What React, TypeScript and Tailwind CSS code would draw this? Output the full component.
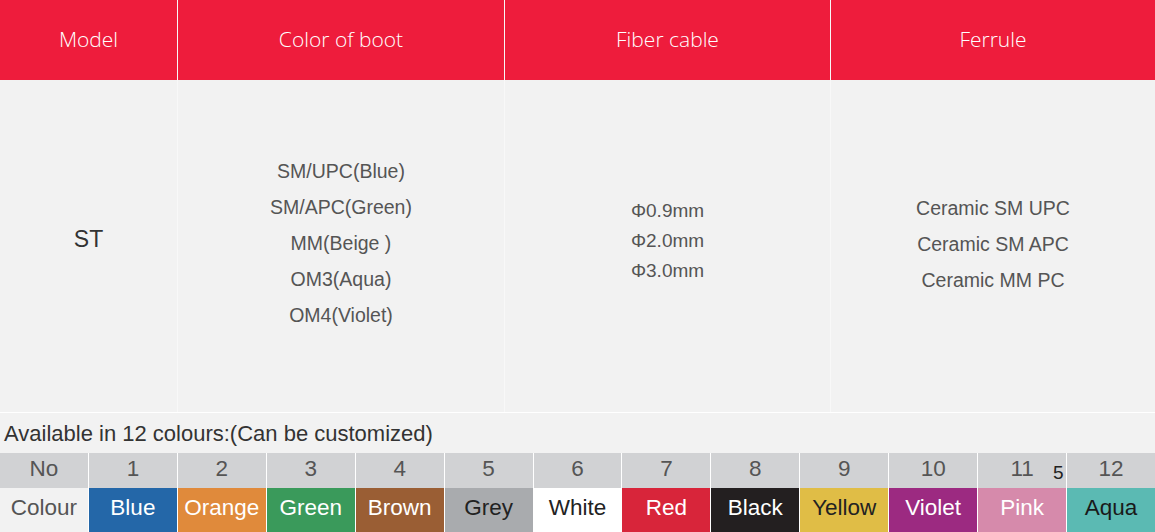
const swatches = [
  { no: 1, name: "Blue", bg: "bg-[#2467a8]", fg: "text-white" },
  { no: 2, name: "Orange", bg: "bg-[#e08a3b]", fg: "text-white" },
  { no: 3, name: "Green", bg: "bg-[#3a9a5b]", fg: "text-white" },
  { no: 4, name: "Brown", bg: "bg-[#9a5e34]", fg: "text-white" },
  { no: 5, name: "Grey", bg: "bg-[#a9abae]", fg: "text-[#222]" },
  { no: 6, name: "White", bg: "bg-white", fg: "text-[#222]" },
  { no: 7, name: "Red", bg: "bg-[#d8253a]", fg: "text-white" },
  { no: 8, name: "Black", bg: "bg-[#231f20]", fg: "text-white" },
  { no: 9, name: "Yellow", bg: "bg-[#e0bd46]", fg: "text-[#222]" },
  { no: 10, name: "Violet", bg: "bg-[#9c2a81]", fg: "text-white" },
  { no: 11, name: "Pink", bg: "bg-[#d68aab]", fg: "text-white" },
  { no: 12, name: "Aqua", bg: "bg-[#5bbab3]", fg: "text-[#1a1a1a]" },
];

const headers = ["Model", "Color of boot", "Fiber cable", "Ferrule"];

export default function App() {
  return (
    <div className="w-[1155px] h-[532px] overflow-hidden bg-[#f2f2f2] font-['Liberation_Sans',Arial,sans-serif]">
      {/* spec table */}
      <div className="grid grid-cols-[177px_326px_325px_1fr] gap-x-px bg-[#f8f8f8]">
        {headers.map((h) => (
          <div
            key={h}
            className="h-[80px] bg-[#ee1c3c] flex items-center justify-center text-white text-[21px] font-light font-['Open_Sans',sans-serif]"
          >
            {h}
          </div>
        ))}

        <div className="h-[332px] bg-[#f2f2f2] flex items-center justify-center text-[23px] text-[#333]">
          <span className="-mt-[14px]">ST</span>
        </div>
        <div className="h-[332px] bg-[#f2f2f2] flex flex-col items-center justify-center text-[19.5px] text-[#555] leading-[36px]">
          <div className="-mt-[6px] flex flex-col items-center">
            <span>SM/UPC(Blue)</span>
            <span>SM/APC(Green)</span>
            <span>MM(Beige )</span>
            <span>OM3(Aqua)</span>
            <span>OM4(Violet)</span>
          </div>
        </div>
        <div className="h-[332px] bg-[#f2f2f2] flex flex-col items-center justify-center text-[19px] text-[#555] leading-[30px]">
          <div className="-mt-[10px] flex flex-col items-center">
            <span>Φ0.9mm</span>
            <span>Φ2.0mm</span>
            <span>Φ3.0mm</span>
          </div>
        </div>
        <div className="h-[332px] bg-[#f2f2f2] flex flex-col items-center justify-center text-[19.5px] text-[#555] leading-[36px]">
          <div className="-mt-[4px] flex flex-col items-center">
            <span>Ceramic SM UPC</span>
            <span>Ceramic SM APC</span>
            <span>Ceramic MM PC</span>
          </div>
        </div>
      </div>

      <div className="h-px bg-white" />

      <div className="h-[40px] flex items-center px-[4px] text-[22px] text-[#333]">
        Available in 12 colours:(Can be customized)
      </div>

      {/* colour table */}
      <div className="relative grid grid-cols-13 gap-x-px bg-white text-[22.5px]">
        <div className="h-[35px] bg-[#d1d2d4] flex items-center justify-center pb-[3px] text-[#555]">No</div>
        {swatches.map((s) => (
          <div key={s.no} className="h-[35px] bg-[#d1d2d4] flex items-center justify-center pb-[3px] text-[#555]">
            {s.no}
          </div>
        ))}
        <div className="h-[44px] bg-[#f2f2f2] flex items-center justify-center pb-[5px] text-[#555]">Colour</div>
        {swatches.map((s) => (
          <div key={s.name} className={`h-[44px] ${s.bg} ${s.fg} flex items-center justify-center pb-[5px]`}>
            {s.name}
          </div>
        ))}
        <span className="absolute left-[1053px] top-[6px] text-[19px] text-[#222]">5</span>
      </div>
    </div>
  );
}
